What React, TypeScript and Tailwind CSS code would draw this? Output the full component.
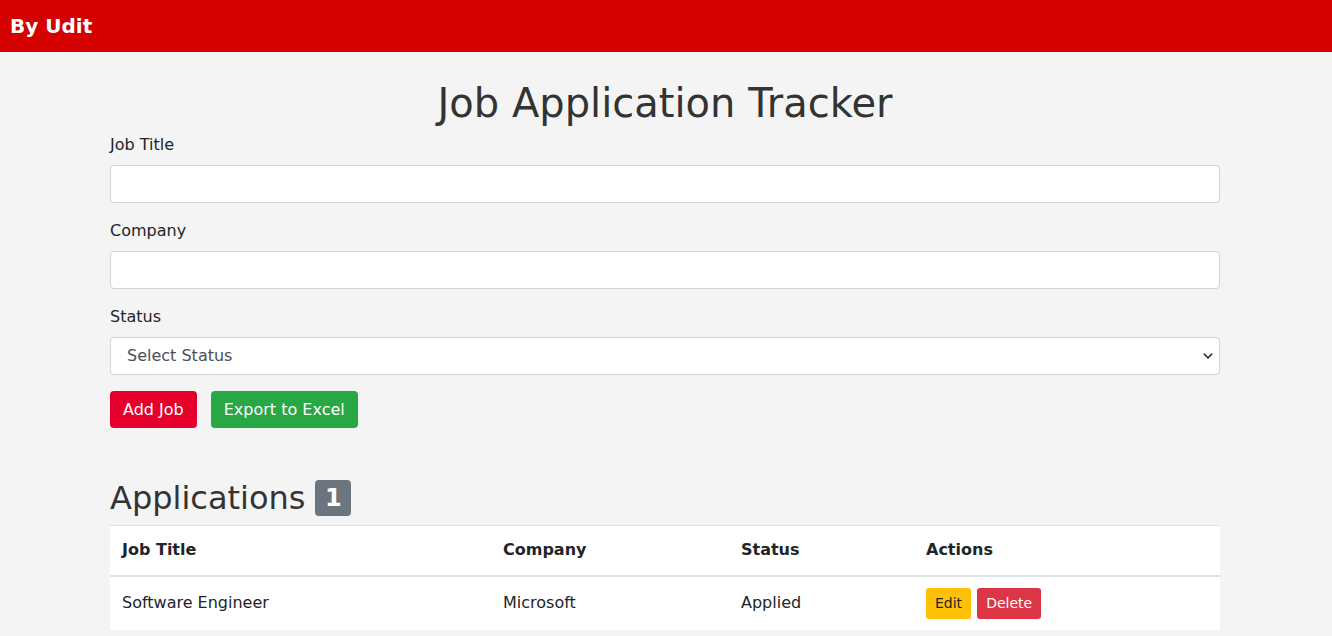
import React from "react";

export default function App() {
  const font = { fontFamily: '"DejaVu Sans", Verdana, sans-serif' };
  return (
    <div className="min-h-[636px] bg-[#f4f4f4] text-[#212529]" style={font}>
      <header className="h-[52px] bg-[#d50000] flex items-center px-[10px]">
        <span className="text-white font-bold text-[20px]">By Udit</span>
      </header>
      <main className="w-[1110px] ml-[110px]">
        <h1 className="text-center text-[40px] leading-[48px] text-[#333] mt-[27px] mb-[6px]">
          Job Application Tracker
        </h1>
        <div className="mb-4">
          <label className="block text-[16px] leading-6 mb-2">Job Title</label>
          <input className="block w-full h-[38px] bg-white border border-[#ced4da] rounded-[4px]" />
        </div>
        <div className="mb-4">
          <label className="block text-[16px] leading-6 mb-2">Company</label>
          <input className="block w-full h-[38px] bg-white border border-[#ced4da] rounded-[4px]" />
        </div>
        <div className="mb-4">
          <label className="block text-[16px] leading-6 mb-2">Status</label>
          <div className="relative h-[38px] bg-white border border-[#ced4da] rounded-[4px] flex items-center pl-4 text-[16px] text-[#495057]">
            Select Status
            <svg className="absolute right-[6px] top-[13px]" width="10" height="10" viewBox="0 0 16 16">
              <path d="M2 5l6 6 6-6" fill="none" stroke="#343a40" strokeWidth="2.6" strokeLinecap="round" strokeLinejoin="round" />
            </svg>
          </div>
        </div>
        <div className="flex gap-[14px]">
          <button className="h-[37px] px-[13px] bg-[#e4002b] text-white text-[16px] rounded-[4px]">Add Job</button>
          <button className="h-[37px] px-[13px] bg-[#28a745] text-white text-[16px] rounded-[4px]">Export to Excel</button>
        </div>
        <h2 className="mt-[51px] mb-[8px] text-[32px] leading-[38px] text-[#333] flex items-center gap-[10px]">
          Applications
          <span className="inline-flex items-center justify-center w-[36px] h-[36px] bg-[#6c757d] text-white text-[24px] font-bold rounded-[4px]">1</span>
        </h2>
        <table className="w-full bg-white text-[16px] border-t border-[#dee2e6]">
          <thead>
            <tr className="border-b-2 border-[#dee2e6] h-[50px]">
              <th className="text-left font-bold px-3 w-[381px]">Job Title</th>
              <th className="text-left font-bold px-3 w-[238px]">Company</th>
              <th className="text-left font-bold px-3 w-[185px]">Status</th>
              <th className="text-left font-bold px-3">Actions</th>
            </tr>
          </thead>
          <tbody>
            <tr className="h-[54px]">
              <td className="px-3">Software Engineer</td>
              <td className="px-3">Microsoft</td>
              <td className="px-3">Applied</td>
              <td className="px-3">
                <div className="flex gap-[6px]">
                  <button className="h-[31px] px-[9px] bg-[#ffc107] text-[#212529] text-[14px] rounded-[3px]">Edit</button>
                  <button className="h-[31px] px-[9px] bg-[#dc3545] text-white text-[14px] rounded-[3px]">Delete</button>
                </div>
              </td>
            </tr>
          </tbody>
        </table>
      </main>
    </div>
  );
}
